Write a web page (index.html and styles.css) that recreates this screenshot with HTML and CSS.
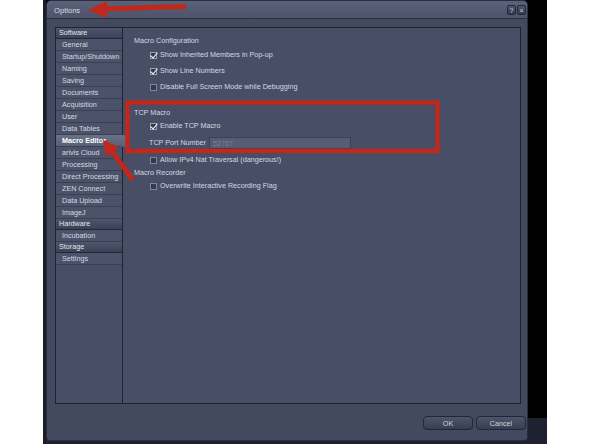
FILE: index.html
```html
<!DOCTYPE html>
<html>
<head>
<meta charset="utf-8">
<title>Options</title>
<link rel="stylesheet" href="styles.css">
</head>
<body>
<div class="screen">
	<div class="window">
		<div class="titlebar">
			<span class="title">Options</span>
			<div class="wbtns"><span class="wbtn">?</span><span class="wbtn">&#215;</span></div>
		</div>
		<div class="body">
			<div class="panel">
				<ul class="nav">
					<li class="head">Software</li>
					<li>General</li>
					<li>Startup/Shutdown</li>
					<li>Naming</li>
					<li>Saving</li>
					<li>Documents</li>
					<li>Acquisition</li>
					<li>User</li>
					<li>Data Tables</li>
					<li class="active">Macro Editor</li>
					<li>arivis Cloud</li>
					<li>Processing</li>
					<li>Direct Processing</li>
					<li>ZEN Connect</li>
					<li>Data Upload</li>
					<li>ImageJ</li>
					<li class="head">Hardware</li>
					<li>Incubation</li>
					<li class="head">Storage</li>
					<li>Settings</li>
				</ul>
				<div class="content">
					<div class="group">Macro Configuration</div>
					<div class="opt first"><span class="cb on"></span>Show Inherited Members in Pop-up</div>
					<div class="opt"><span class="cb on"></span>Show Line Numbers</div>
					<div class="opt"><span class="cb"></span>Disable Full Screen Mode while Debugging</div>
					<div class="group tcp">TCP Macro</div>
					<div class="opt tight"><span class="cb on"></span>Enable TCP Macro</div>
					<div class="port"><span class="plabel">TCP Port Number</span><span class="pinput">52757</span></div>
					<div class="opt ipv4"><span class="cb"></span>Allow IPv4 Nat Traversal (dangerous!)</div>
					<div class="group rec">Macro Recorder</div>
					<div class="opt tight"><span class="cb"></span>Overwrite Interactive Recording Flag</div>
				</div>
			</div>
			<div class="actions">
				<span class="btn">OK</span>
				<span class="btn">Cancel</span>
			</div>
		</div>
	</div>
</div>
<svg class="annot" width="592" height="444" viewBox="0 0 592 444">
	<rect x="127.5" y="102.5" width="310" height="48.5" fill="none" stroke="#c1271a" stroke-width="4.5"/>
	<line x1="186" y1="6.5" x2="102" y2="9" stroke="#c1271a" stroke-width="5"/>
	<polygon points="88,10 107,1 107,18" fill="#c1271a"/>
	<line x1="133" y1="180" x2="111" y2="150" stroke="#c1271a" stroke-width="5"/>
	<polygon points="103,140 119,147 106,157" fill="#c1271a"/>
</svg>
</body>
</html>
```
FILE: styles.css
```css
*{margin:0;padding:0;box-sizing:border-box;}
ul,li{list-style-type:none;}
body{background:#fff;width:592px;height:444px;overflow:hidden;position:relative;font-family:"Liberation Sans",Arial,sans-serif;font-size:7.2px;color:#d6d9e1;}
.screen{margin-left:43px;width:504px;height:444px;border-left:3px solid #1b1e28;background:linear-gradient(#000 418px,#1e2130 418px);}
.window{width:482px;height:441px;background:#434a60;border:1px solid #2a2e3b;border-radius:5px 5px 4px 4px;display:flex;flex-direction:column;}
.titlebar{height:18px;display:flex;align-items:center;justify-content:space-between;padding:0 1px 0 7px;background:linear-gradient(#5a6179,#4c536b);border-bottom:1px solid #2b2f3d;border-radius:4px 4px 0 0;}
.title{font-size:7.6px;color:#d8dbe3;padding-top:1px;}
.wbtns{display:flex;gap:1px;}
.wbtn{width:9px;height:10px;line-height:9px;text-align:center;font-size:7px;color:#c9ccd6;background:linear-gradient(#505770,#343a4d);border:1px solid #23273a;border-radius:2px;}
.body{flex:1;padding:8px 6px 0 8px;display:flex;flex-direction:column;}
.panel{height:377px;display:flex;background:#474e66;border:1px solid #1f2330;}
.nav{width:67px;border-right:1px solid #1f2330;position:relative;}
.nav li{height:12px;line-height:12px;padding-left:6px;background:#4b526a;border-bottom:1px solid #3a4054;white-space:nowrap;position:relative;}
.nav .head{height:11px;line-height:10px;padding-left:3px;color:#e3e6ec;background:linear-gradient(#4e556d,#3b4156);border-bottom:1px solid #232735;}
.nav .active{background:linear-gradient(#6a7189,#586078);color:#fff;font-weight:bold;}
.nav .active:after{content:"";position:absolute;right:-7px;top:0;width:12px;height:12px;border-radius:6px;background:linear-gradient(#6a7189,#586078);}
.content{flex:1;padding:7px 0 0 11px;}
.group{height:12px;line-height:12px;}
.opt{height:12px;line-height:12px;margin-top:4px;padding-left:16px;display:flex;align-items:center;}
.opt.first{margin-top:2px;}
.opt.tight{margin-top:1px;}
.group.tcp{margin-top:14px;}
.group.rec{margin-top:1px;}
.opt.ipv4{margin-top:5px;}
.cb{width:7px;height:7px;border:1px solid #7f859a;background:#343a4c;margin-right:3px;position:relative;}
.cb.on{border-color:#9a9fb0;}
.cb.on:after{content:"";position:absolute;left:1px;top:-2px;width:3px;height:6px;border-right:1.6px solid #fff;border-bottom:1.6px solid #fff;transform:rotate(40deg);}
.port{height:13px;margin-top:4px;padding-left:15px;display:flex;align-items:center;}
.plabel{width:60px;}
.pinput{width:142px;height:12px;line-height:11px;padding-left:3px;background:#555c73;border:1px solid #3c4256;color:#7d8398;}
.actions{display:flex;justify-content:flex-end;gap:3px;margin-top:12px;padding-right:0;margin-right:-5px;}
.btn{width:50px;height:14px;line-height:13px;text-align:center;color:#d0d3dc;background:linear-gradient(#4d546c,#383e52);border:1px solid #22263a;border-radius:4px;}
.annot{position:absolute;left:0;top:0;}
```
